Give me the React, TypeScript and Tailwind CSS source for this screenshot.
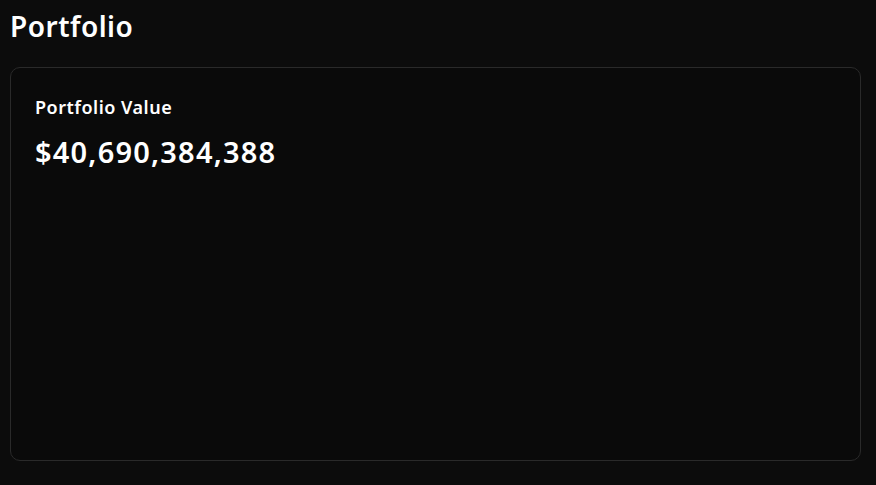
import React from "react";

export default function App() {
  return (
    <div className="min-h-[485px] w-full bg-[#0c0c0c] pl-[10px] pr-[15px] pt-[6px] pb-6 text-white" style={{ fontFamily: '"Noto Sans", "Open Sans", sans-serif' }}>
      <h1 className="text-[28px] font-semibold leading-[40px] tracking-[0.5px]">Portfolio</h1>
      <div className="mt-[21px] h-[394px] rounded-[10px] border border-[#2a2a2a] bg-[#0a0a0a] px-6 pt-[26px]">
        <div className="text-[18px] font-semibold leading-[26px] tracking-[0.5px]">Portfolio Value</div>
        <div className="mt-[12px] text-[29px] font-semibold leading-[40px] tracking-[1.2px]">$40,690,384,388</div>
      </div>
    </div>
  );
}
